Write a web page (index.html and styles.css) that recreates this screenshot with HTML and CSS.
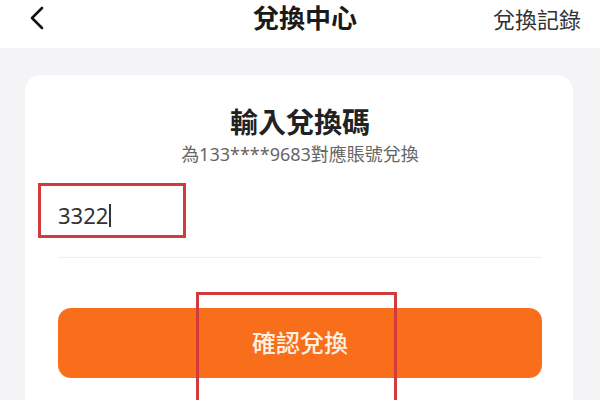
FILE: index.html
```html
<!DOCTYPE html>
<html lang="zh-Hant">
<head>
<meta charset="utf-8">
<title>兌換中心</title>
<link rel="stylesheet" href="styles.css">
</head>
<body>
<div class="page">
  <header class="topbar">
    <div class="back">
      <svg width="16" height="24" viewBox="0 0 16 24"><path d="M13 2 L3 12 L13 22" fill="none" stroke="#111" stroke-width="2.6" stroke-linecap="round" stroke-linejoin="round"/></svg>
    </div>
    <h1 class="title">兌換中心</h1>
    <div class="record">兌換記錄</div>
  </header>
  <main class="content">
    <section class="card">
      <h2 class="card-title">輸入兌換碼</h2>
      <p class="card-sub">為133****9683對應賬號兌換</p>
      <div class="input-row">
        <span class="code">3322</span><span class="caret"></span>
      </div>
      <div class="divider"></div>
      <button class="confirm">確認兌換</button>
    </section>
    <div class="mark mark-input"></div>
    <div class="mark mark-button"></div>
  </main>
</div>
</body>
</html>
```
FILE: styles.css
```css
* { box-sizing: border-box; }
html, body { margin: 0; padding: 0; }
body {
  font-family: "Noto Sans", "Noto Sans CJK TC", sans-serif;
  background: #f4f4f6;
}
.page {
  width: 600px;
  height: 400px;
  overflow: hidden;
  position: relative;
}
.topbar {
  height: 48px;
  background: #fff;
  display: grid;
  grid-template-columns: 1fr auto 1fr;
  align-items: center;
  padding: 0 19px 13px 29px;
}
.back { display: flex; align-items: center; }
.title {
  margin: 0;
  font-size: 26px;
  font-weight: 700;
  color: #1a1a1a;
  line-height: 30px;
}
.record {
  justify-self: end;
  font-size: 22px;
  color: #333;
  line-height: 28px;
  margin-top: 3px;
}
.content {
  padding: 27px 27px 0 25px;
}
.card {
  background: #fff;
  border-radius: 16px 16px 0 0;
  height: 360px;
  padding: 29px 31px 0 33px;
  display: flex;
  flex-direction: column;
  align-items: center;
}
.card-title {
  margin: 0;
  font-size: 28px;
  font-weight: 700;
  color: #222;
  line-height: 36px;
}
.card-sub {
  margin: 2px 0 0;
  font-size: 18px;
  color: #666;
  line-height: 24px;
}
.input-row {
  align-self: stretch;
  height: 64px;
  margin-top: 12px;
  display: flex;
  align-items: center;
  padding-top: 10px;
}
.code {
  font-size: 22px;
  color: #333;
  line-height: 28px;
}
.caret {
  width: 1.5px;
  height: 23px;
  background: #333;
  margin-left: 1px;
}
.divider {
  align-self: stretch;
  height: 1px;
  background: #eeeeee;
  margin-top: 15px;
}
.confirm {
  margin-top: 50px;
  align-self: stretch;
  height: 70px;
  border: none;
  border-radius: 13px;
  background: #f86e1a;
  color: #fdf1e4;
  font-family: "Noto Sans", "Noto Sans CJK TC", sans-serif;
  font-size: 24px;
  font-weight: 500;
  padding-bottom: 4px;
}
.mark {
  position: absolute;
  border: 3px solid #d23a3c;
}
.mark-input {
  left: 38px;
  top: 183px;
  width: 148px;
  height: 55px;
}
.mark-button {
  left: 196px;
  top: 292px;
  width: 201px;
  height: 130px;
}
```
